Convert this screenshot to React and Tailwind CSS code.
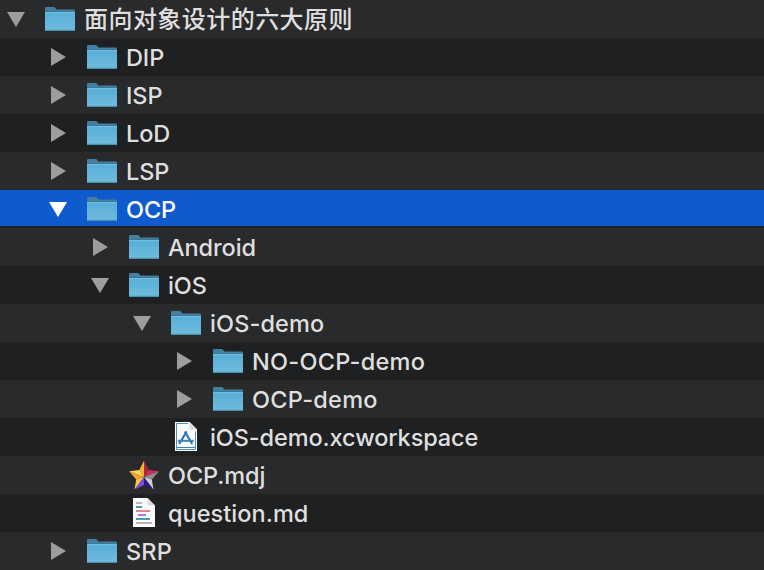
function Triangle({ open, selected }) {
  return (
    <svg width="18" height="38" viewBox="0 0 18 38" className="shrink-0" fill={selected ? "#ffffff" : "#9c9d9e"}>
      {open ? <path d="M0 12H18L9 27Z" /> : <path d="M2 10V28L17 19Z" />}
    </svg>
  );
}

function Folder() {
  return (
    <svg width="30" height="38" viewBox="0 0 30 38" className="shrink-0">
      <defs>
        <linearGradient id="folderFront" x1="0" y1="0" x2="0" y2="1">
          <stop offset="0" stopColor="#56add8" />
          <stop offset="1" stopColor="#71bcdc" />
        </linearGradient>
      </defs>
      <path d="M0 8.2Q0 7 1.2 7H8.6Q9.6 7 10.3 8L11.3 9.6H28.8Q30 9.6 30 10.8V14H0Z" fill="#447f9f" />
      <path d="M0 11.8H30V30Q30 31 29 31H1Q0 31 0 30Z" fill="url(#folderFront)" />
      <path d="M0 11.5H30V12.2H0Z" fill="#2f6480" />
      <path d="M0 12.2H30V13.1H0Z" fill="#7ac6e6" />
      <path d="M0 29.8H30V30.2Q30 31 29 31H1Q0 31 0 30.2Z" fill="#4a93b3" />
    </svg>
  );
}

function Workspace() {
  return (
    <svg width="30" height="38" viewBox="0 0 30 38" className="shrink-0">
      <path d="M4 4H18.5L26 11.5V33H4Z" fill="#fbfcfd" />
      <path d="M17 5.5H5.5V31.5H24.5V12.5" fill="none" stroke="#4d8fc4" strokeWidth="1" />
      <path d="M17 4H18.5L26 11.5V13.5H20L17 10Z" fill="#f4f4f4" />
      <path d="M18.5 4V10.2Q18.5 11.5 20 11.5H26Z" fill="#dcdcdc" />
      <path d="M15.6 13.5L8.2 26M13.8 13.5L21.2 26" fill="none" stroke="#3076b5" strokeWidth="2.2" />
      <path d="M6.8 22.8H22.8" stroke="#3c82bd" strokeWidth="2" />
      <path d="M6 29.5H24" stroke="#3f80b8" strokeWidth="1" />
    </svg>
  );
}

function Star() {
  return (
    <svg width="30" height="38" viewBox="0 0 30 38" className="shrink-0">
      <path d="M15 4.8L10.3 14L15 21Z" fill="#f5b52f" />
      <path d="M15 4.8L19.7 14L15 21Z" fill="#a62a45" />
      <path d="M0 15.2L10.3 14L15 21Z" fill="#ffd560" />
      <path d="M0 15.2L7.2 23.4L15 21Z" fill="#f0a62c" />
      <path d="M30 15.2L19.7 14L15 21Z" fill="#d92655" />
      <path d="M30 15.2L22.8 23.4L15 21Z" fill="#8e8e8e" />
      <path d="M5.5 33.4L7.2 23.4L15 21Z" fill="#ffc844" />
      <path d="M5.5 33.4L15 29L15 21Z" fill="#7652d8" />
      <path d="M24.5 33.4L15 29L15 21Z" fill="#351783" />
      <path d="M24.5 33.4L22.8 23.4L15 21Z" fill="#d0d0d0" />
    </svg>
  );
}

function Markdown() {
  return (
    <svg width="30" height="38" viewBox="0 0 30 38" className="shrink-0">
      <path d="M4 4H18.5L26 11.5V33H4Z" fill="#fbfbfb" />
      <path d="M18.5 4V10.2Q18.5 11.5 20 11.5H26Z" fill="#dcdcdc" />
      <g strokeWidth="2">
        <path d="M7 9H13M7 29H23" stroke="#b5b5b5" />
        <path d="M7 13H13M7 25H21" stroke="#4a9dad" />
        <path d="M7 17H21" stroke="#d68a90" />
        <path d="M9 21H17" stroke="#a57bf0" />
      </g>
    </svg>
  );
}

const icons = { folder: Folder, workspace: Workspace, star: Star, markdown: Markdown };

const indents = ["pl-[7px]", "pl-[49px]", "pl-[91px]", "pl-[133px]", "pl-[175px]"];

const rows = [
  { name: "面向对象设计的六大原则", level: 0, open: true, font: "text-[24px] tracking-[0.45px]" },
  { name: "DIP", level: 1, open: false },
  { name: "ISP", level: 1, open: false },
  { name: "LoD", level: 1, open: false },
  { name: "LSP", level: 1, open: false },
  { name: "OCP", level: 1, open: true, selected: true },
  { name: "Android", level: 2, open: false },
  { name: "iOS", level: 2, open: true },
  { name: "iOS-demo", level: 3, open: true, font: "text-[23.5px] tracking-[0.1px]" },
  { name: "NO-OCP-demo", level: 4, open: false, font: "text-[23.5px] tracking-[0.25px]" },
  { name: "OCP-demo", level: 4, open: false, font: "text-[23.5px] tracking-[0.25px]" },
  { name: "iOS-demo.xcworkspace", level: 3, icon: "workspace", font: "text-[23.5px] tracking-[-0.1px]" },
  { name: "OCP.mdj", level: 2, icon: "star" },
  { name: "question.md", level: 2, icon: "markdown", font: "text-[23.5px] tracking-[0.05px]" },
  { name: "SRP", level: 1, open: false, font: "text-[23.5px] tracking-[0.15px]" },
];

function Row({ row, index }) {
  const Icon = icons[row.icon || "folder"];
  const stripe = index % 2 ? "bg-[#1f2021]" : "bg-[#292a2b]";
  const tone = row.selected
    ? "bg-[#0f5bcd] text-white h-[38px] border-b-2 border-[#1f2021]"
    : stripe + " text-[#dfdfdf] h-[38px]";
  return (
    <div className={"flex items-start overflow-hidden " + tone + " " + indents[row.level]}>
      {row.icon ? <span className="w-[18px] shrink-0" /> : <Triangle open={row.open} selected={row.selected} />}
      <span className="ml-5 flex">
        <Icon />
      </span>
      <span className={"ml-[9px] leading-[40px] font-medium whitespace-nowrap " + (row.font || "text-[23.5px] tracking-[-0.1px]")}>
        {row.name}
      </span>
    </div>
  );
}

export default function App() {
  return (
    <div className="h-[570px] w-[764px] overflow-hidden bg-[#1f2021] font-['Inter','Noto_Sans_CJK_SC',sans-serif]">
      {rows.map((row, i) => (
        <Row key={row.name} row={row} index={i} />
      ))}
    </div>
  );
}
